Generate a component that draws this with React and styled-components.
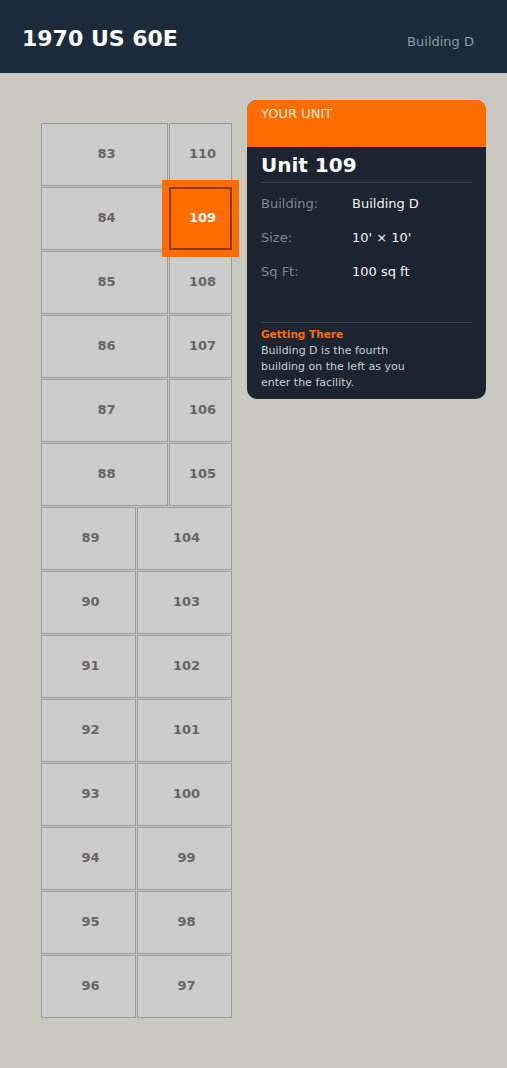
import React from "react";
import styled, { createGlobalStyle } from "styled-components";

const Global = createGlobalStyle`
  html, body { margin: 0; padding: 0; }
  body {
    background: #c9c9c1;
    font-family: "DejaVu Sans", "Liberation Sans", sans-serif;
  }
`;

const Page = styled.div`
  min-height: 100vh;
  background: #c9c9c1;
`;

const TopBar = styled.header`
  height: 73px;
  box-sizing: border-box;
  background: #1c2b3c;
  display: flex;
  align-items: baseline;
  justify-content: space-between;
  padding: 26px 33px 0 22px;
`;

const Title = styled.h1`
  margin: 0;
  font-size: 22px;
  font-weight: 700;
  color: #ffffff;
`;

const SubTitle = styled.span`
  font-size: 13px;
  color: #8d9aa8;
`;

const Main = styled.main`
  display: flex;
  align-items: flex-start;
  gap: 15px;
  padding: 27px 21px 50px 41px;
`;

const Map = styled.div`
  margin-top: 23px;
  width: 191px;
  display: flex;
  flex-direction: column;
  gap: 1px;
`;

const Section = styled.div`
  display: grid;
  grid-template-columns: ${(p) => p.$cols};
  grid-auto-rows: 63px;
  gap: 1px;
`;

const Cell = styled.div`
  position: relative;
  box-sizing: border-box;
  display: flex;
  align-items: center;
  justify-content: center;
  padding: 0 0 3px 4px;
  font-size: 13px;
  font-weight: 700;
  background: ${(p) => (p.$selected ? "#ff6c00" : "#cccccc")};
  color: ${(p) => (p.$selected ? "#ffffff" : "#666666")};
  border: ${(p) => (p.$selected ? "2px solid #8d3a06" : "1px solid #9a9a9a")};
  box-shadow: ${(p) => (p.$selected ? "0 0 0 7px #ff6c00" : "none")};
  z-index: ${(p) => (p.$selected ? 2 : 0)};
`;

const Panel = styled.aside`
  flex: 1;
  border-radius: 10px;
  overflow: hidden;
  background: #1b2430;
`;

const PanelHead = styled.div`
  height: 47px;
  box-sizing: border-box;
  background: #ff6c00;
  padding: 6px 14px 0;
  font-size: 13px;
  line-height: 15px;
  color: rgba(255, 255, 255, 0.88);
`;

const PanelBody = styled.div`
  padding: 6px 14px 8px;
`;

const UnitName = styled.h2`
  margin: 0;
  font-size: 20px;
  line-height: 24px;
  font-weight: 700;
  color: #ffffff;
  padding-bottom: 5px;
  border-bottom: 1px solid #37434f;
`;

const Details = styled.dl`
  margin: 0;
  padding: 3px 0 34px;
  border-bottom: 1px solid #37434f;
`;

const Row = styled.div`
  height: 34px;
  display: flex;
  align-items: center;
  font-size: 13px;
`;

const Label = styled.dt`
  width: 91px;
  color: #7b8896;
`;

const Value = styled.dd`
  margin: 0;
  color: #f2f4f6;
`;

const Directions = styled.div`
  padding-top: 4px;
`;

const DirTitle = styled.div`
  font-size: 10.5px;
  line-height: 14px;
  font-weight: 700;
  color: #ff6c00;
`;

const DirText = styled.p`
  margin: 2px 0 0;
  max-width: 165px;
  font-size: 11px;
  line-height: 16px;
  color: #c8cfd6;
`;

const topRows = [
  [83, 110],
  [84, 109],
  [85, 108],
  [86, 107],
  [87, 106],
  [88, 105],
];
const bottomRows = [
  [89, 104],
  [90, 103],
  [91, 102],
  [92, 101],
  [93, 100],
  [94, 99],
  [95, 98],
  [96, 97],
];

const SELECTED = 109;

export default function App() {
  return (
    <Page>
      <Global />
      <TopBar>
        <Title>1970 US 60E</Title>
        <SubTitle>Building D</SubTitle>
      </TopBar>
      <Main>
        <Map>
          <Section $cols="127px 63px">
            {topRows.flat().map((n) => (
              <Cell key={n} $selected={n === SELECTED}>
                {n}
              </Cell>
            ))}
          </Section>
          <Section $cols="95px 95px">
            {bottomRows.flat().map((n) => (
              <Cell key={n} $selected={n === SELECTED}>
                {n}
              </Cell>
            ))}
          </Section>
        </Map>
        <Panel>
          <PanelHead>YOUR UNIT</PanelHead>
          <PanelBody>
            <UnitName>Unit 109</UnitName>
            <Details>
              <Row>
                <Label>Building:</Label>
                <Value>Building D</Value>
              </Row>
              <Row>
                <Label>Size:</Label>
                <Value>10' × 10'</Value>
              </Row>
              <Row>
                <Label>Sq Ft:</Label>
                <Value>100 sq ft</Value>
              </Row>
            </Details>
            <Directions>
              <DirTitle>Getting There</DirTitle>
              <DirText>
                Building D is the fourth building on the left as you enter the
                facility.
              </DirText>
            </Directions>
          </PanelBody>
        </Panel>
      </Main>
    </Page>
  );
}
